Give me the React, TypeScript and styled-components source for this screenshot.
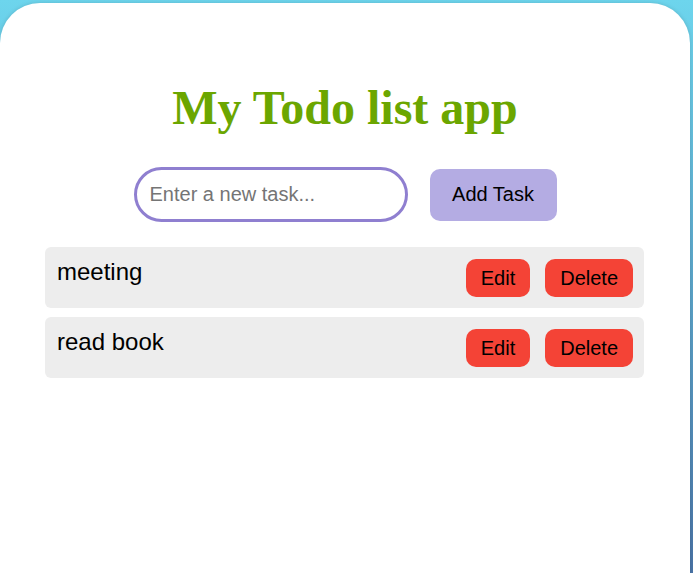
import styled, { createGlobalStyle } from "styled-components";
import { useState } from "react";

interface ITodo {
  id: number;
  text: string;
}

const GlobalStyle = createGlobalStyle`
  html, body {
    margin: 0;
    height: 100%;
    overflow: hidden;
  }
  body {
    background: linear-gradient(to bottom, #6dd5ed, #4a74a6);
    font-family: "Liberation Sans", Arial, sans-serif;
  }
`;

const App = () => {
  const [task, setTask] = useState("");
  const [todos, setTodos] = useState<ITodo[]>([
    { id: 1, text: "meeting" },
    { id: 2, text: "read book" },
  ]);

  const onClickAdd = () => {
    if (!task.trim()) return;
    setTodos([...todos, { id: Date.now(), text: task }]);
    setTask("");
  };

  const onClickEdit = (id: number) => {
    const next = window.prompt("Edit task");
    if (next) setTodos(todos.map((t) => (t.id === id ? { ...t, text: next } : t)));
  };

  const onClickDelete = (id: number) => {
    setTodos(todos.filter((t) => t.id !== id));
  };

  return (
    <>
      <GlobalStyle />
      <Page>
        <Card>
          <Title>My Todo list app</Title>
          <InputRow>
            <TaskInput
              value={task}
              onChange={(e) => setTask(e.target.value)}
              placeholder="Enter a new task..."
            />
            <AddButton onClick={onClickAdd}>Add Task</AddButton>
          </InputRow>
          <TodoList>
            {todos.map((todo) => (
              <TodoItem key={todo.id}>
                <TodoText>{todo.text}</TodoText>
                <Actions>
                  <ActionButton onClick={() => onClickEdit(todo.id)}>Edit</ActionButton>
                  <ActionButton onClick={() => onClickDelete(todo.id)}>Delete</ActionButton>
                </Actions>
              </TodoItem>
            ))}
          </TodoList>
        </Card>
      </Page>
    </>
  );
};

const Page = styled.div`
  padding: 3px 3px 0 0;
  height: 100vh;
  box-sizing: border-box;
`;

const Card = styled.div`
  box-sizing: border-box;
  height: 100%;
  background-color: white;
  border-radius: 40px 40px 0 0;
  padding-top: 77px;
  box-shadow: 0 0 4px rgba(0, 0, 0, 0.15);
`;

const Title = styled.h1`
  margin: 0;
  text-align: center;
  font-family: "Liberation Serif", "Times New Roman", serif;
  font-weight: 700;
  font-size: 48px;
  line-height: 55px;
  color: #6ba600;
`;

const InputRow = styled.div`
  display: flex;
  justify-content: center;
  align-items: center;
  gap: 22px;
  margin-top: 32px;
`;

const TaskInput = styled.input`
  box-sizing: border-box;
  width: 274px;
  height: 55px;
  padding: 0 13px;
  border: 3px solid #8f7fd0;
  border-radius: 28px;
  outline: none;
  font-family: "Liberation Sans", Arial, sans-serif;
  font-size: 20px;
  color: black;

  &::placeholder {
    color: #757575;
  }
`;

const AddButton = styled.button`
  cursor: pointer;
  width: 127px;
  height: 52px;
  padding: 0;
  border: none;
  border-radius: 10px;
  background-color: #b4ace3;
  font-family: "Liberation Sans", Arial, sans-serif;
  font-size: 20px;
  color: black;
`;

const TodoList = styled.ul`
  list-style: none;
  width: 599px;
  margin: 25px 0 0 45px;
  padding: 0;
  display: flex;
  flex-direction: column;
  gap: 9px;
`;

const TodoItem = styled.li`
  display: flex;
  justify-content: space-between;
  align-items: flex-start;
  padding: 12px 11px 11px 12px;
  border-radius: 6px;
  background-color: #ededed;
`;

const TodoText = styled.span`
  font-size: 24px;
  line-height: 38px;
  margin-top: -6px;
  color: black;
`;

const Actions = styled.div`
  display: flex;
  gap: 15px;
`;

const ActionButton = styled.button`
  cursor: pointer;
  height: 38px;
  padding: 0 15px;
  border: none;
  border-radius: 10px;
  background-color: #f44336;
  font-family: "Liberation Sans", Arial, sans-serif;
  font-size: 20px;
  color: black;
`;

export default App;
